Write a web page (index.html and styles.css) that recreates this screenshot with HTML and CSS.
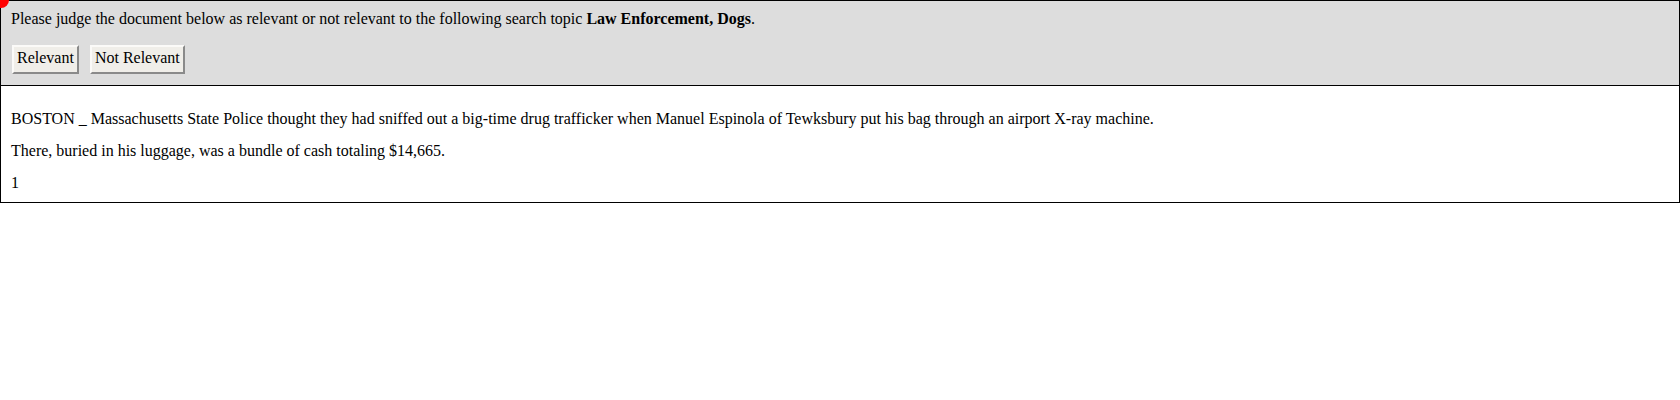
FILE: index.html
```html
<!DOCTYPE html>
<html>
<head>
<meta charset="utf-8">
<link rel="stylesheet" href="styles.css">
</head>
<body>
<div class="dot"></div>
<div class="judge">
  <div class="prompt">Please judge the document below as relevant or not relevant to the following search topic <b>Law Enforcement, Dogs</b>.</div>
  <div class="actions">
    <button class="btn">Relevant</button>
    <button class="btn">Not Relevant</button>
  </div>
</div>
<div class="doc">
  <p>BOSTON _ Massachusetts State Police thought they had sniffed out a big-time drug trafficker when Manuel Espinola of Tewksbury put his bag through an airport X-ray machine.</p>
  <p>There, buried in his luggage, was a bundle of cash totaling $14,665.</p>
  <div class="page-no">1</div>
</div>
</body>
</html>
```
FILE: styles.css
```css
html, body {
  margin: 0;
  padding: 0;
  background: #fff;
}
body {
  font-family: "Liberation Serif", "Times New Roman", serif;
  font-size: 16px;
  line-height: 16px;
  color: #000;
  position: relative;
}
.dot {
  position: absolute;
  left: -7px;
  top: -8px;
  width: 16px;
  height: 16px;
  border-radius: 50%;
  background: #f00;
  z-index: 2;
}
.judge {
  background: #dddddd;
  border: 1px solid #000;
  padding: 10px 10px 11px 10px;
}
.actions {
  display: flex;
  gap: 11px;
  margin-top: 18px;
  padding-left: 1px;
}
.btn {
  font-family: "Liberation Serif", "Times New Roman", serif;
  font-size: 16px;
  line-height: 16px;
  color: #000;
  background: #f0eee9;
  border: 2px solid;
  border-top-color: #fbfaf8;
  border-left-color: #fbfaf8;
  border-right-color: #8a8a8a;
  border-bottom-color: #8a8a8a;
  padding: 3px 3px 6px 3px;
  height: 29px;
}
.doc {
  border: 1px solid #000;
  border-top: none;
  padding: 9px 10px 11px 10px;
}
.doc p {
  margin: 16px 0;
}
.page-no {
  margin: 0;
}
```
